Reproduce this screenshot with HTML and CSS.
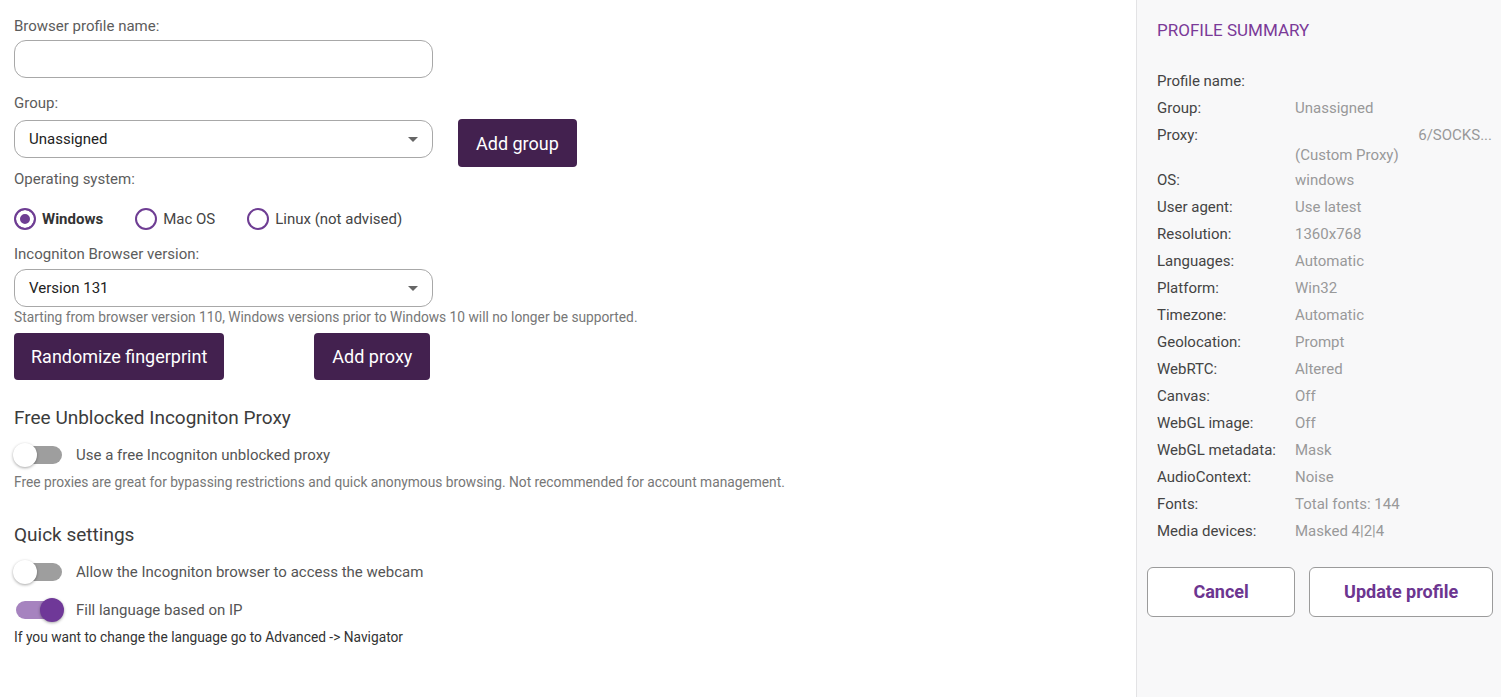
FILE: index.html
```html
<!DOCTYPE html>
<html lang="en">
<head>
    <meta charset="UTF-8">
    <meta name="viewport" content="width=device-width, initial-scale=1.0">
    <title>Edit profile</title>
    <link rel="stylesheet" href="styles.css">
</head>
<body>
    <div class="layout">
        <div class="main">
            <div class="label">Browser profile name:</div>
            <input class="text-input" type="text">

            <div class="label label-group">Group:</div>
            <div class="group-row">
                <div class="select">Unassigned<span class="caret"></span></div>
                <a class="btn btn-add-group" href="#">Add group</a>
            </div>

            <div class="label label-os">Operating system:</div>
            <div class="radios">
                <label class="radio-item"><span class="radio checked"></span><b>Windows</b></label>
                <label class="radio-item"><span class="radio"></span>Mac OS</label>
                <label class="radio-item"><span class="radio"></span>Linux (not advised)</label>
            </div>

            <div class="label label-version">Incogniton Browser version:</div>
            <div class="select">Version 131<span class="caret"></span></div>
            <div class="hint hint-version">Starting from browser version 110, Windows versions prior to Windows 10 will no longer be supported.</div>

            <div class="btn-row">
                <a class="btn btn-random" href="#">Randomize fingerprint</a>
                <a class="btn btn-proxy" href="#">Add proxy</a>
            </div>

            <h2 class="section-title title-proxy">Free Unblocked Incogniton Proxy</h2>
            <div class="toggle-row">
                <span class="switch"></span>
                <span>Use a free Incogniton unblocked proxy</span>
            </div>
            <div class="hint">Free proxies are great for bypassing restrictions and quick anonymous browsing. Not recommended for account management.</div>

            <h2 class="section-title title-quick">Quick settings</h2>
            <div class="toggle-row">
                <span class="switch"></span>
                <span>Allow the Incogniton browser to access the webcam</span>
            </div>
            <div class="toggle-row">
                <span class="switch on"></span>
                <span>Fill language based on IP</span>
            </div>
            <div class="hint hint-dark">If you want to change the language go to Advanced -&gt; Navigator</div>
        </div>

        <div class="summary">
            <h3>PROFILE SUMMARY</h3>
            <div class="summary-list">
                <div class="row"><span class="key">Profile name:</span><span class="val"></span></div>
                <div class="row"><span class="key">Group:</span><span class="val">Unassigned</span></div>
                <div class="row row-proxy">
                    <span class="key">Proxy:</span>
                    <span class="val">
                        <span class="proxy-line">6/SOCKS...</span>
                        <span>(Custom Proxy)</span>
                    </span>
                </div>
                <div class="row"><span class="key">OS:</span><span class="val">windows</span></div>
                <div class="row"><span class="key">User agent:</span><span class="val">Use latest</span></div>
                <div class="row"><span class="key">Resolution:</span><span class="val">1360x768</span></div>
                <div class="row"><span class="key">Languages:</span><span class="val">Automatic</span></div>
                <div class="row"><span class="key">Platform:</span><span class="val">Win32</span></div>
                <div class="row"><span class="key">Timezone:</span><span class="val">Automatic</span></div>
                <div class="row"><span class="key">Geolocation:</span><span class="val">Prompt</span></div>
                <div class="row"><span class="key">WebRTC:</span><span class="val">Altered</span></div>
                <div class="row"><span class="key">Canvas:</span><span class="val">Off</span></div>
                <div class="row"><span class="key">WebGL image:</span><span class="val">Off</span></div>
                <div class="row"><span class="key">WebGL metadata:</span><span class="val">Mask</span></div>
                <div class="row"><span class="key">AudioContext:</span><span class="val">Noise</span></div>
                <div class="row"><span class="key">Fonts:</span><span class="val">Total fonts: 144</span></div>
                <div class="row"><span class="key">Media devices:</span><span class="val">Masked 4|2|4</span></div>
            </div>
            <div class="summary-actions">
                <a class="outline-btn btn-cancel" href="#">Cancel</a>
                <a class="outline-btn btn-update" href="#">Update profile</a>
            </div>
        </div>
    </div>
</body>
</html>
```

FILE: styles.css
```css
body {
    margin: 0;
    font-family: Roboto, "Liberation Sans", Arial, sans-serif;
    background-color: #fff;
    color: #333;
}
.layout {
    display: flex;
    min-height: 697px;
}
.main {
    flex: 1;
    padding: 17px 14px 16px;
}
.label {
    font-size: 15px;
    line-height: 18px;
    color: #5c5c5c;
    margin-bottom: 5px;
}
.label-group {
    margin-top: 16px;
    margin-bottom: 8px;
}
.label-os {
    margin-top: 3px;
    margin-bottom: 0;
}
.label-version {
    margin-top: 15px;
    margin-bottom: 6px;
}
.text-input {
    display: block;
    box-sizing: border-box;
    width: 419px;
    height: 38px;
    margin: 0;
    border: 1px solid #a8a8a8;
    border-radius: 12px;
    background: #fff;
    outline: none;
}
.select {
    box-sizing: border-box;
    width: 419px;
    height: 38px;
    display: flex;
    align-items: center;
    justify-content: space-between;
    padding: 0 14px;
    border: 1px solid #a8a8a8;
    border-radius: 12px;
    font-size: 15px;
    color: #222;
}
.caret {
    width: 0;
    height: 0;
    border-left: 5px solid transparent;
    border-right: 5px solid transparent;
    border-top: 5px solid #666;
}
.group-row {
    display: flex;
    align-items: flex-start;
}
.btn {
    display: inline-flex;
    align-items: center;
    height: 47px;
    padding: 0 18px;
    border-radius: 4px;
    background-color: #43214f;
    color: #fff;
    font-size: 18px;
    text-decoration: none;
}
.btn-add-group {
    height: 48px;
    margin-left: 25px;
    margin-top: -1px;
}
.btn-random {
    padding: 0 17px;
}
.radios {
    display: flex;
    gap: 32px;
    margin-top: 20px;
}
.radio-item {
    display: flex;
    align-items: center;
    gap: 6px;
    font-size: 15px;
    line-height: 22px;
    color: #444;
}
.radio-item b {
    color: #333;
}
.radio {
    box-sizing: border-box;
    width: 22px;
    height: 22px;
    border: 2px solid #6e3d93;
    border-radius: 50%;
}
.radio.checked {
    background-color: #6e3d93;
    box-shadow: inset 0 0 0 4px #fff;
}
.hint {
    font-size: 13.75px;
    line-height: 16px;
    color: #777;
    margin-top: 7px;
}
.hint-version {
    margin-top: 2px;
}
.hint-dark {
    color: #333;
}
.btn-row {
    display: flex;
    margin-top: 8px;
}
.btn-proxy {
    margin-left: 90px;
}
.section-title {
    margin: 0;
    font-size: 19px;
    line-height: 22px;
    font-weight: 400;
    color: #3c3c3c;
}
.title-proxy {
    margin-top: 27px;
}
.title-quick {
    margin-top: 34px;
}
.toggle-row {
    display: flex;
    align-items: center;
    gap: 13px;
    margin-top: 14px;
    font-size: 15px;
    color: #555;
}
.switch {
    position: relative;
    flex: none;
    width: 50px;
    height: 24px;
    margin-left: -1px;
}
.switch::before {
    content: "";
    position: absolute;
    left: 3px;
    top: 3px;
    width: 46px;
    height: 18px;
    border-radius: 9px;
    background-color: #9e9e9e;
}
.switch::after {
    content: "";
    position: absolute;
    left: 0;
    top: 0;
    width: 24px;
    height: 24px;
    border-radius: 50%;
    background-color: #fff;
    box-shadow: 0 1px 3px rgba(0, 0, 0, 0.35);
}
.switch.on::before {
    background-color: #a683bf;
}
.switch.on::after {
    left: 27px;
    background-color: #6f3898;
}

/* right column */
.summary {
    box-sizing: border-box;
    width: 365px;
    flex: none;
    padding: 20px 8px 0 20px;
    background-color: #f8f8f9;
    border-left: 1px solid #e3e3e5;
}
.summary h3 {
    margin: 0 0 27px;
    font-size: 17px;
    line-height: 20px;
    font-weight: 400;
    color: #7b3a98;
}
.row {
    display: flex;
    padding: 3.5px 0;
    font-size: 15px;
    line-height: 20px;
}
.row-proxy {
    padding-bottom: 2px;
}
.key {
    width: 138px;
    flex: none;
    color: #444;
}
.val {
    flex: 1;
    color: #999;
}
.row-proxy .val {
    display: flex;
    flex-direction: column;
}
.proxy-line {
    text-align: right;
    padding-right: 1px;
}
.summary-actions {
    display: flex;
    gap: 14px;
    margin-top: 22px;
    margin-left: -10px;
}
.outline-btn {
    box-sizing: border-box;
    display: flex;
    align-items: center;
    justify-content: center;
    height: 50px;
    border: 1px solid #9b9b9b;
    border-radius: 6px;
    background-color: #fff;
    color: #6c3590;
    font-size: 18px;
    font-weight: bold;
    text-decoration: none;
}
.btn-cancel {
    width: 150px;
}
.btn-update {
    width: 186px;
}
```
